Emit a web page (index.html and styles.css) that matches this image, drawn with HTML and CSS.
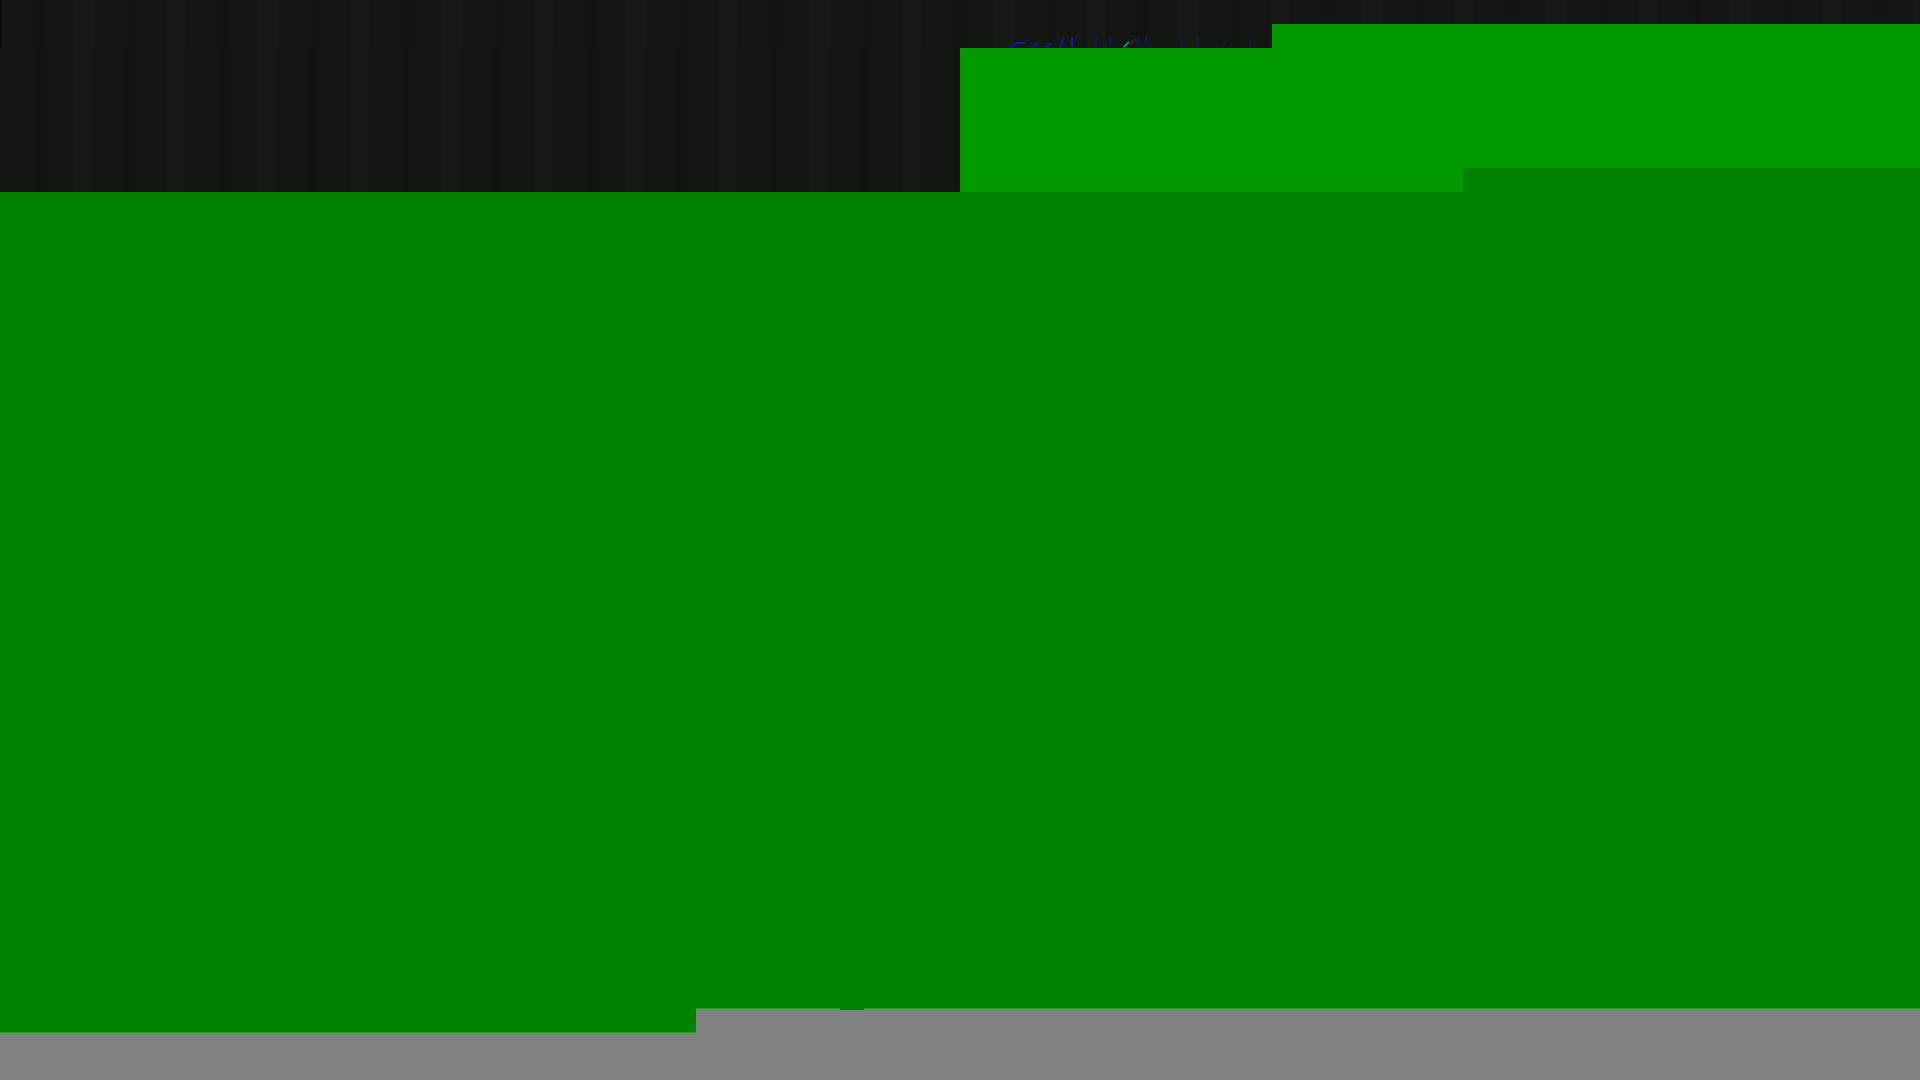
FILE: index.html
```html
<!DOCTYPE html>
<html lang="en">
<head>
  <meta charset="UTF-8" />
  <meta name="viewport" content="width=device-width, initial-scale=1.0" />
  <title>Page</title>
  <link rel="stylesheet" href="styles.css">
</head>
<body>

<div class="pagina">
  <div class="topo-faixa"></div>
  <div class="topo-lado"></div>
  <div class="banner-esquerdo">
    <svg class="manchas" width="312" height="14" viewBox="0 0 312 14">
      <path d="M50 13l6-4h10M72 13l6-4M86 13l6-4M100 13l4-9M112 13V3" stroke="#1414b0" stroke-width="2" fill="none" />
      <path d="M136 13V4M150 13V4M178 13V4M186 13V3" stroke="#141466" stroke-width="2" fill="none" />
      <path d="M222 13V5M238 13V3M262 13l5-7M290 13V5" stroke="#16163f" stroke-width="2" fill="none" />
      <path d="M164 13l5-5" stroke="#1a8a9a" stroke-width="2" fill="none" />
      <path d="M170 11l5-6" stroke="#7a1a2a" stroke-width="1" fill="none" />
    </svg>
  </div>
  <div class="banner-direito"></div>
  <div class="rodape-esquerdo"></div>
  <div class="rodape-direito"><span class="entalhe"></span></div>
</div>

</body>
</html>
```

FILE: styles.css
```css
body {
  margin: 0;
  background: #008400;
  overflow: hidden;
}
.pagina {
  display: grid;
  grid-template-columns: 696px 264px 312px 191px 1fr;
  grid-template-rows: 24px 24px 120px 24px 1fr 24px 48px;
  height: 100vh;
}
.topo-faixa,
.topo-lado {
  background-color: #141614;
  background-image: repeating-linear-gradient(90deg, transparent 0, transparent 34px, rgba(0, 0, 0, 0.08) 34px, rgba(0, 0, 0, 0.08) 41px, transparent 41px, transparent 73px, rgba(255, 255, 255, 0.006) 73px, rgba(255, 255, 255, 0.006) 92px);
}
.topo-faixa {
  grid-column: 1 / -1;
  grid-row: 1 / 3;
  border-left: 2px solid #0a0b0a;
}
.topo-lado {
  grid-column: 1 / 3;
  grid-row: 3 / 5;
}
.banner-esquerdo,
.banner-direito {
  background: #009a00;
}
.banner-esquerdo {
  grid-column: 3 / 5;
  grid-row: 3 / 5;
}
.banner-direito {
  grid-column: 4 / 6;
  grid-row: 2 / 4;
  z-index: 1;
}
.manchas {
  display: block;
  margin-top: -14px;
}
.rodape-esquerdo,
.rodape-direito {
  background: #80827f;
  border-top: 1px solid #2f962f;
}
.rodape-esquerdo {
  grid-column: 1;
  grid-row: 7;
}
.rodape-direito {
  grid-column: 2 / -1;
  grid-row: 6 / 8;
  position: relative;
}
.entalhe {
  position: absolute;
  top: -1px;
  left: 144px;
  width: 24px;
  height: 2px;
  background: #087a08;
}
```
